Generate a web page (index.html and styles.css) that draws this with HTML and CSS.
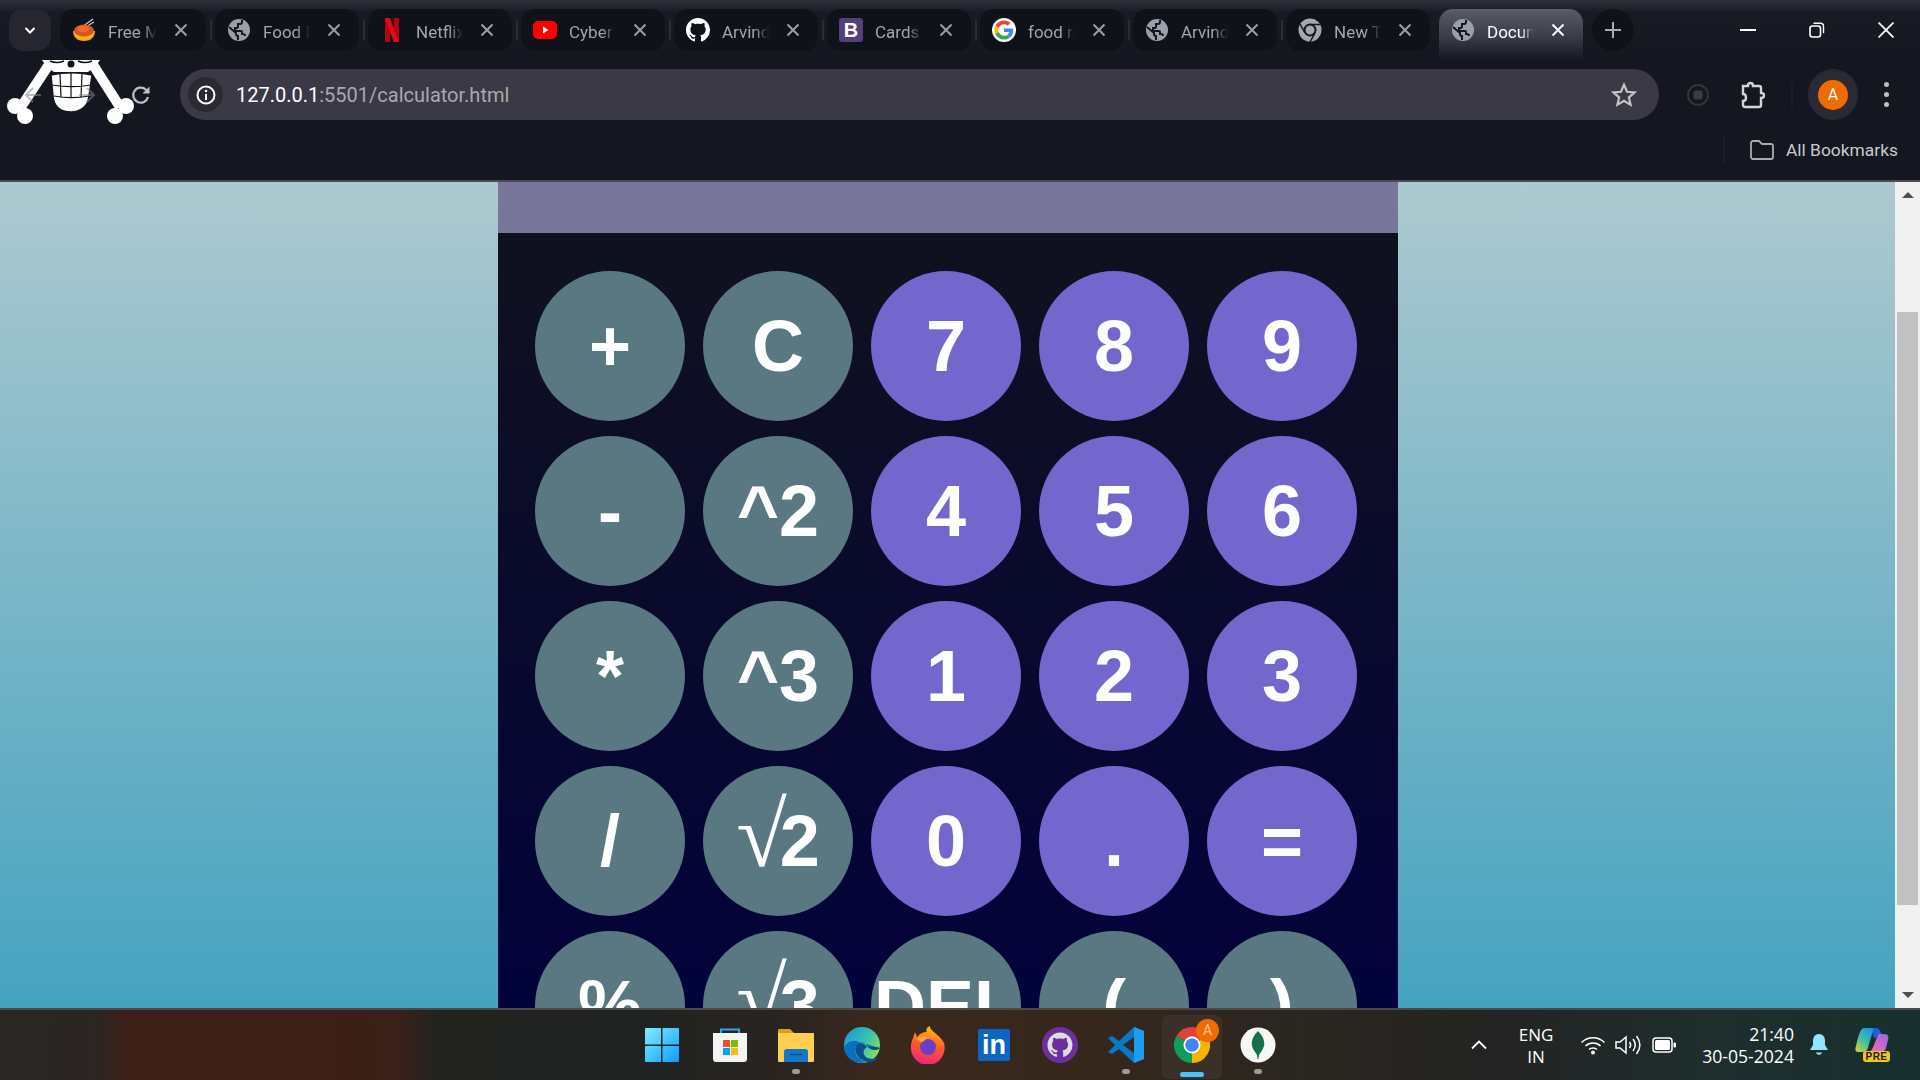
FILE: index.html
```html
<!DOCTYPE html>
<html lang="en">
<head>
    <meta charset="UTF-8">
    <meta name="viewport" content="width=device-width, initial-scale=1.0">
    <title>Document</title>
    <link rel="stylesheet" href="styles.css">
</head>
<body>
    <svg class="defs" width="0" height="0">
        <symbol id="globe" viewBox="0 0 24 24">
            <circle cx="12" cy="12" r="11" fill="#9aa0aa"/>
            <path d="M2 9l7 6v1a2 2 0 0 0 2 2v4M15 2v2a2 2 0 0 1-2 2h-2v3a1 1 0 0 1-1 1H8v3h6a1 1 0 0 1 1 1v2h1a2 2 0 0 1 2 2" fill="none" stroke="#15171f" stroke-width="2"/>
        </symbol>
        <symbol id="cross" viewBox="0 0 14 14">
            <path d="M1.500 1.500l11 11M12.500 1.500l-11 11" stroke="currentColor" stroke-width="2" fill="none"/>
        </symbol>
    </svg>

    <header class="browser">
        <div class="tabstrip">
            <button class="tab-menu">
                <svg width="14" height="14" viewBox="0 0 14 14"><path d="M2.500 5l4.500 4.500L11.500 5" stroke="#fff" stroke-width="2" fill="none"/></svg>
            </button>
            <div class="tabs">
                <div class="tab">
                    <svg class="favicon" viewBox="0 0 24 24"><path d="M10 9L21 1M12 10l10-6" stroke="#c9c9c9" stroke-width="1.200"/><path d="M1 13h22c0 6-4 10-11 10S1 19 1 13z" fill="#f5ab25"/><ellipse cx="12" cy="12.500" rx="10" ry="6" fill="#d9531e"/><ellipse cx="11" cy="11" rx="6" ry="3.500" fill="#e9702a"/></svg>
                    <span class="tab-title">Free Meal</span>
                    <svg class="tab-close"><use href="#cross"/></svg>
                </div>
                <div class="tab">
                    <svg class="favicon"><use href="#globe"/></svg>
                    <span class="tab-title">Food Recipe</span>
                    <svg class="tab-close"><use href="#cross"/></svg>
                </div>
                <div class="tab">
                    <svg class="favicon" viewBox="0 0 24 24"><path d="M5 0h5v24l-5 .5z" fill="#b1060f"/><path d="M14 0h5v24.500L14 24z" fill="#b1060f"/><path d="M5 0h5l9 24.500h-5z" fill="#e50914"/></svg>
                    <span class="tab-title">Netflix</span>
                    <svg class="tab-close"><use href="#cross"/></svg>
                </div>
                <div class="tab">
                    <svg class="favicon" viewBox="0 0 24 24"><rect y="3" width="24" height="18" rx="5" fill="#f00"/><path d="M10 8.500v7l5.500-3.500z" fill="#fff"/></svg>
                    <span class="tab-title">Cyber</span>
                    <svg class="tab-close"><use href="#cross"/></svg>
                </div>
                <div class="tab">
                    <svg class="favicon" viewBox="0 0 16 16"><path fill="#fff" d="M8 0C3.580 0 0 3.580 0 8c0 3.540 2.290 6.530 5.470 7.590.4.070.55-.17.55-.38 0-.19-.01-.82-.01-1.490-2.010.37-2.530-.49-2.690-.94-.09-.23-.48-.94-.82-1.130-.28-.15-.68-.52-.01-.53.63-.01 1.080.58 1.230.82.72 1.210 1.870.87 2.330.66.07-.52.28-.87.51-1.070-1.780-.2-3.640-.89-3.640-3.950 0-.87.31-1.590.82-2.150-.08-.2-.36-1.020.08-2.120 0 0 .67-.21 2.200.82.64-.18 1.320-.27 2-.27s1.360.09 2 .27c1.530-1.040 2.200-.82 2.200-.82.44 1.100.16 1.920.08 2.120.51.56.82 1.270.82 2.150 0 3.070-1.870 3.750-3.650 3.950.29.25.54.73.54 1.480 0 1.070-.01 1.930-.01 2.200 0 .21.15.46.55.38A8.013 8.013 0 0 0 16 8c0-4.420-3.580-8-8-8z"/></svg>
                    <span class="tab-title">Arvind</span>
                    <svg class="tab-close"><use href="#cross"/></svg>
                </div>
                <div class="tab">
                    <span class="favicon favicon-b">B</span>
                    <span class="tab-title">Cards</span>
                    <svg class="tab-close"><use href="#cross"/></svg>
                </div>
                <div class="tab">
                    <svg class="favicon" viewBox="-6 -6 60 60"><circle cx="24" cy="24" r="30" fill="#fff"/><path fill="#EA4335" d="M24 9.500c3.540 0 6.710 1.220 9.210 3.600l6.850-6.850C35.900 2.380 30.470 0 24 0 14.620 0 6.510 5.380 2.560 13.220l7.980 6.190C12.430 13.720 17.740 9.500 24 9.500z"/><path fill="#4285F4" d="M46.980 24.550c0-1.570-.15-3.090-.38-4.550H24v9.020h12.940c-.58 2.960-2.260 5.480-4.780 7.180l7.730 6c4.510-4.180 7.090-10.360 7.090-17.650z"/><path fill="#FBBC05" d="M10.530 28.590c-.48-1.450-.76-2.990-.76-4.590s.27-3.140.76-4.590l-7.980-6.190C.92 16.460 0 20.120 0 24c0 3.880.92 7.540 2.560 10.780l7.970-6.190z"/><path fill="#34A853" d="M24 48c6.480 0 11.930-2.130 15.890-5.810l-7.730-6c-2.150 1.450-4.920 2.300-8.160 2.300-6.260 0-11.570-4.220-13.470-9.910l-7.980 6.190C6.510 42.620 14.620 48 24 48z"/></svg>
                    <span class="tab-title">food recipes</span>
                    <svg class="tab-close"><use href="#cross"/></svg>
                </div>
                <div class="tab">
                    <svg class="favicon"><use href="#globe"/></svg>
                    <span class="tab-title">Arvind</span>
                    <svg class="tab-close"><use href="#cross"/></svg>
                </div>
                <div class="tab">
                    <svg class="favicon" viewBox="0 0 24 24"><circle cx="12" cy="12" r="11.500" fill="#a4a7ad"/><circle cx="12" cy="12" r="5.500" fill="#a4a7ad" stroke="#15171f" stroke-width="2"/><path d="M12 6.500h10M7 15l-5-9M17 15l-5 9" stroke="#15171f" stroke-width="1.500"/></svg>
                    <span class="tab-title">New Tab</span>
                    <svg class="tab-close"><use href="#cross"/></svg>
                </div>
                <div class="tab tab-active">
                    <svg class="favicon"><use href="#globe"/></svg>
                    <span class="tab-title">Document</span>
                    <svg class="tab-close"><use href="#cross"/></svg>
                </div>
            </div>
            <button class="tab-new">
                <svg width="16" height="16" viewBox="0 0 16 16"><path d="M8 0v16M0 8h16" stroke="#a9abb0" stroke-width="2"/></svg>
            </button>
            <div class="win-controls">
                <svg width="16" height="16" viewBox="0 0 16 16"><path d="M0 8h16" stroke="#fff" stroke-width="2"/></svg>
                <svg width="16" height="16" viewBox="0 0 16 16"><rect x="1" y="4" width="10.500" height="11" rx="2.500" fill="none" stroke="#fff" stroke-width="1.600"/><path d="M4.500 1.200h7a3 3 0 0 1 3 3v7" fill="none" stroke="#fff" stroke-width="1.400"/></svg>
                <svg width="16" height="16" viewBox="0 0 16 16"><path d="M.5.500l15 15M15.500.500l-15 15" stroke="#fff" stroke-width="1.800"/></svg>
            </div>
        </div>

        <div class="toolbar">
            <!-- logo sits under the back / forward arrows -->
            <svg class="logo" width="134" height="70" viewBox="0 0 134 70">
                <path d="M52 0L21 47" stroke="#fff" stroke-width="10" fill="none"/>
                <path d="M90 0l30 47" stroke="#fff" stroke-width="10" fill="none"/>
                <circle cx="15" cy="46" r="8" fill="#fff"/><circle cx="25" cy="56" r="8" fill="#fff"/>
                <circle cx="126" cy="46" r="8" fill="#fff"/><circle cx="115" cy="56" r="8" fill="#fff"/>
                <path d="M42 0h58c-3 5-7 9-12 12l-34 0c-5-3-9-7-12-12z" fill="#fff"/>
                <path d="M51 15c13-3 28-3 41 0l-3 21c-1 11-9 16-18 16-10 0-17-5-18-16z" fill="#fff" stroke="#14171f" stroke-width="1.500"/>
                <circle cx="71" cy="4" r="3.500" fill="#111"/>
                <path d="M50 1c4 2 9 2 14 0M78 1c4 2 9 2 14 0" stroke="#111" stroke-width="1.500" fill="none"/>
                <path d="M52 25c13 2 27 2 39 0M54 36c11 2 24 2 35 0M60 14l1 23M71 13v25M82 14l-1 23" stroke="#111" stroke-width="1.200" fill="none"/>
            </svg>
            <div class="nav">
                <svg class="nav-btn nav-off" width="24" height="24" viewBox="0 0 24 24"><path d="M20 12H5M12 5l-7 7 7 7" stroke="#85868c" stroke-width="2" fill="none"/></svg>
                <svg class="nav-btn nav-off" width="24" height="24" viewBox="0 0 24 24"><path d="M4 12h15M12 5l7 7-7 7" stroke="#85868c" stroke-width="2" fill="none"/></svg>
                <svg class="nav-btn" width="24" height="24" viewBox="0 0 24 24"><path d="M19 14a7.500 7.500 0 1 1-2-7.200L20 9.500" stroke="#bfc0c4" stroke-width="2.200" fill="none"/><path d="M20.500 3.500v7h-7z" fill="#bfc0c4"/></svg>
            </div>
            <div class="omnibox">
                <span class="site-info">
                    <svg width="20" height="20" viewBox="0 0 20 20"><circle cx="10" cy="10" r="8.500" fill="none" stroke="#fff" stroke-width="2"/><path d="M10 9v6" stroke="#fff" stroke-width="2"/><circle cx="10" cy="6" r="1.300" fill="#fff"/></svg>
                </span>
                <span class="url"><span class="url-host">127.0.0.1</span>:5501/calculator.html</span>
                <svg class="star" width="26" height="26" viewBox="0 0 24 24"><path d="M12 2.500l2.800 6.500 7 .6-5.300 4.600 1.600 6.900-6.100-3.700-6.100 3.700 1.600-6.900L2.200 9.600l7-.6z" fill="none" stroke="#c4c5c9" stroke-width="2"/></svg>
            </div>
            <svg class="rec" width="24" height="24" viewBox="0 0 24 24"><circle cx="12" cy="12" r="10" fill="none" stroke="#33343a" stroke-width="2"/><rect x="7.500" y="7.500" width="9" height="9" rx="2" fill="#3b3c42"/></svg>
            <svg class="puzzle" width="26" height="28" viewBox="0 0 26 28"><path d="M3 5h5c0-4 5-4 5 0h6a2 2 0 0 1 2 2v5c4 0 4 5 0 5v7a2 2 0 0 1-2 2H5a2 2 0 0 1-2-2v-4c4 0 4-7 0-7z" fill="none" stroke="#d4d5d8" stroke-width="2.400"/></svg>
            <span class="tool-sep"></span>
            <span class="avatar-chip"><span class="avatar">A</span></span>
            <span class="kebab"><i></i><i></i><i></i></span>
        </div>

        <div class="bookmarks">
            <span class="tool-sep"></span>
            <svg width="24" height="20" viewBox="0 0 24 20"><path d="M1 17V3a2 2 0 0 1 2-2h6l3 3h9a2 2 0 0 1 2 2v11a2 2 0 0 1-2 2H3a2 2 0 0 1-2-2z" fill="none" stroke="#a9abb0" stroke-width="1.800"/></svg>
            <span class="bookmarks-label">All Bookmarks</span>
        </div>
    </header>

    <main class="viewport">
        <div class="page">
            <div class="calc">
                <div class="calc-display"></div>
                <div class="keypad">
                    <button class="key key-op">+</button>
                    <button class="key key-op">C</button>
                    <button class="key">7</button>
                    <button class="key">8</button>
                    <button class="key">9</button>

                    <button class="key key-op">-</button>
                    <button class="key key-op">^2</button>
                    <button class="key">4</button>
                    <button class="key">5</button>
                    <button class="key">6</button>

                    <button class="key key-op">*</button>
                    <button class="key key-op">^3</button>
                    <button class="key">1</button>
                    <button class="key">2</button>
                    <button class="key">3</button>

                    <button class="key key-op">/</button>
                    <button class="key key-op"><span class="root">√</span>2</button>
                    <button class="key">0</button>
                    <button class="key">.</button>
                    <button class="key">=</button>

                    <button class="key key-op">%</button>
                    <button class="key key-op"><span class="root">√</span>3</button>
                    <button class="key key-op">DEL</button>
                    <button class="key key-op">(</button>
                    <button class="key key-op">)</button>
                </div>
            </div>
        </div>
        <div class="scrollbar">
            <span class="arrow arrow-up"></span>
            <div class="scroll-track"><div class="scroll-thumb"></div></div>
            <span class="arrow arrow-down"></span>
        </div>
    </main>

    <footer class="taskbar">
        <div class="task-apps">
            <div class="app app-start">
                <svg width="36" height="36" viewBox="0 0 36 36">
                    <defs><linearGradient id="win" x1="0" y1="0" x2="1" y2="1"><stop offset="0" stop-color="#7eeeff"/><stop offset="1" stop-color="#0f9bff"/></linearGradient></defs>
                    <path d="M1 2a1 1 0 0 1 1-1h15v16.500H1zM18.500 1H34a1 1 0 0 1 1 1v15.500H18.500zM1 19h16v16H2a1 1 0 0 1-1-1zM18.500 19H35v15a1 1 0 0 1-1 1H18.500z" fill="url(#win)"/>
                </svg>
            </div>
            <div class="app">
                <svg width="36" height="36" viewBox="0 0 36 36">
                    <path d="M9 8V2.500h18V8" fill="none" stroke="#2aa8e8" stroke-width="2"/>
                    <path d="M1 6h34v26a3 3 0 0 1-3 3H4a3 3 0 0 1-3-3z" fill="#f4f4f4"/>
                    <rect x="11" y="13" width="7" height="7" fill="#f25022"/><rect x="19" y="13" width="7" height="7" fill="#7fba00"/>
                    <rect x="11" y="21" width="7" height="7" fill="#00a4ef"/><rect x="19" y="21" width="7" height="7" fill="#ffb900"/>
                </svg>
            </div>
            <div class="app app-open">
                <svg width="36" height="36" viewBox="0 0 36 36">
                    <path d="M0 3a1 1 0 0 1 1-1h11l4 4h20v6H0z" fill="#dea20c"/>
                    <path d="M0 6h36v28a1 1 0 0 1-1 1H1a1 1 0 0 1-1-1z" fill="#ffd04f"/>
                    <path d="M6 35V25a3 3 0 0 1 3-3h18a3 3 0 0 1 3 3v10z" fill="#1478c9"/>
                    <path d="M12 27.500h12" stroke="#0b4f8a" stroke-width="1.500"/>
                </svg>
            </div>
            <div class="app">
                <svg width="36" height="36" viewBox="0 0 36 36">
                    <defs><linearGradient id="edge" x1="0" y1="0" x2="1" y2="0.600"><stop offset="0" stop-color="#1497d8"/><stop offset=".6" stop-color="#36c0b0"/><stop offset="1" stop-color="#7ee060"/></linearGradient></defs>
                    <circle cx="18" cy="18" r="18" fill="url(#edge)"/>
                    <path d="M36 21c-3 3-10 3-13-2-2-4-7-5-10-2-5 6 0 17 10 18-10 3-22-3-23-14 2-6 10-9 15-6z" fill="#0c6fbd"/>
                    <path d="M13 17c-4 5-1 15 10 18 4 1 9-1 11-5-5 3-11 2-13-1-3-4-1-7 2-9-3-4-7-5-10-3z" fill="#0b4f92"/>
                    <path d="M36 21c-2 2-9 3-13-2 2 2 7 0 13 2z" fill="#1c2220" opacity=".5"/>
                </svg>
            </div>
            <div class="app">
                <svg width="36" height="38" viewBox="0 0 36 38">
                    <defs><linearGradient id="fox" x1="0.600" y1="0" x2="0.400" y2="1"><stop offset="0" stop-color="#ffc400"/><stop offset=".5" stop-color="#ff5a2c"/><stop offset="1" stop-color="#f0207e"/></linearGradient></defs>
                    <path d="M3 12L5 6l2 5c3-4 7-5 10-5-2-2 0-5 3-6-1 5 9 7 14 17 3 11-5 22-16 22S0 29 1 20c0-3 1-6 2-8z" fill="url(#fox)"/>
                    <circle cx="18" cy="21" r="8" fill="#6a3fc8"/>
                    <path d="M7 13c3-3 7-3 11-1-3 1-4 3-5 4-3 0-5-1-6-3z" fill="#ffa436"/>
                </svg>
            </div>
            <div class="app">
                <span class="linkedin">in</span>
            </div>
            <div class="app">
                <svg width="36" height="36" viewBox="-3.500 -3.500 23 23">
                    <circle cx="8" cy="8" r="11.500" fill="#6e2f9e"/>
                    <path fill="#ddd" d="M8 0C3.580 0 0 3.580 0 8c0 3.540 2.290 6.530 5.470 7.590.4.070.55-.17.55-.38v-1.490c-2.010.37-2.530-.49-2.690-.94-.09-.23-.48-.94-.82-1.130-.28-.15-.68-.52-.01-.53.63-.01 1.080.58 1.230.82.72 1.210 1.870.87 2.330.66.07-.52.28-.87.51-1.070-1.780-.2-3.640-.89-3.640-3.950 0-.87.31-1.590.82-2.150-.08-.2-.36-1.020.08-2.120 0 0 .67-.21 2.200.82.64-.18 1.320-.27 2-.27s1.360.09 2 .27c1.530-1.040 2.200-.82 2.200-.82.44 1.100.16 1.920.08 2.120.51.56.82 1.270.82 2.150 0 3.070-1.870 3.750-3.650 3.950.29.25.54.73.54 1.480v2.200c0 .21.15.46.55.38A8.013 8.013 0 0 0 16 8c0-4.420-3.580-8-8-8z"/>
                </svg>
            </div>
            <div class="app app-open">
                <svg width="36" height="36" viewBox="0 0 36 36">
                    <path fill-rule="evenodd" d="M26 0L11 14 4 9 0 11l7 7-7 7 4 2 7-5 15 14 10-4V4zM26 10l-11 8 11 8z" fill="#0a78c8"/>
                    <path d="M26 0l10 4v28l-10 4z" fill="#1f9cf0"/>
                </svg>
            </div>
            <div class="app app-active">
                <svg width="36" height="36" viewBox="-18 -18 36 36">
                    <path d="M15.600-9A18 18 0 0 0-15.600-9L0 0z" fill="#db4437"/>
                    <path d="M-15.600-9A18 18 0 0 0 0 18L0 0z" fill="#0f9d58"/>
                    <path d="M0 18A18 18 0 0 0 15.600-9L0 0z" fill="#f4b400"/>
                    <circle r="8.500" fill="#fff"/><circle r="6.800" fill="#4285f4"/>
                </svg>
                <span class="app-badge">A</span>
            </div>
            <div class="app app-open">
                <svg width="36" height="36" viewBox="0 0 36 36">
                    <circle cx="18" cy="18" r="17.500" fill="#f7f7f5"/>
                    <path d="M18 4c5 5 7 10 6 15-1 4-4 7-5 9l-.5 4h-1l-.5-4c-1-2-4-5-5-9-1-5 1-10 6-15z" fill="#13704a"/>
                </svg>
            </div>
        </div>

        <div class="tray">
            <svg class="tray-caret" width="16" height="10" viewBox="0 0 16 10"><path d="M1 8.500l7-7 7 7" fill="none" stroke="#fff" stroke-width="1.800"/></svg>
            <div class="tray-lang"><span>ENG</span><span>IN</span></div>
            <svg class="tray-wifi" width="26" height="20" viewBox="0 0 26 20"><path d="M1.500 7.500c6-6.500 17-6.500 23 0M5.500 11c4-4 11-4 15 0M9 14.500c2-2 6-2 8 0" fill="none" stroke="#fff" stroke-width="1.500"/><circle cx="13" cy="17.500" r="2" fill="#fff"/></svg>
            <svg class="tray-vol" width="26" height="22" viewBox="0 0 26 22"><path d="M1 8h4l6-5v16l-6-5H1z" fill="none" stroke="#fff" stroke-width="1.500"/><path d="M14.500 8c1.500 2 1.500 4 0 6M18 5c3 4 3 8 0 12M21.500 2c4.500 6 4.500 12 0 18" fill="none" stroke="#fff" stroke-width="1.500"/></svg>
            <svg class="tray-bat" width="24" height="16" viewBox="0 0 24 16"><rect x="1" y="1" width="19" height="14" rx="3" fill="none" stroke="#fff" stroke-width="1.500"/><rect x="3" y="3" width="15" height="10" rx="1.500" fill="#fff"/><rect x="21.500" y="5.500" width="2.500" height="5" rx="1" fill="#fff"/></svg>
            <div class="tray-clock"><span>21:40</span><span>30-05-2024</span></div>
            <svg class="tray-bell" width="20" height="24" viewBox="0 0 20 24"><path d="M10 1c-4 0-6 3-6 7v4l-3 5h18l-3-5V8c0-4-2-7-6-7z" fill="#93e4ff"/><path d="M7 19.500h6c-.5 3-5.500 3-6 0z" fill="#93e4ff"/></svg>
            <div class="copilot">
                <svg width="34" height="26" viewBox="0 0 34 26">
                    <defs>
                        <linearGradient id="cop1" x1="0" y1="1" x2="0.800" y2="0"><stop offset="0" stop-color="#e8d030"/><stop offset=".5" stop-color="#3fc0a0"/><stop offset="1" stop-color="#1e90e8"/></linearGradient>
                        <linearGradient id="cop2" x1="0" y1="1" x2="1" y2="0"><stop offset="0" stop-color="#f070b0"/><stop offset="1" stop-color="#a060e8"/></linearGradient>
                    </defs>
                    <path d="M9 1h11c-3 5-5 12-7 20-1 3-3 4-6 4H3c-3 0-3-3-2-6C3 11 5 1 9 1z" fill="url(#cop1)"/>
                    <path d="M18 1h3c3 0 4 2 5 5l1 3-8 2c-1-3-1-7-1-10z" fill="#1b63d8"/>
                    <path d="M24 7h6c3 0 4 3 3 6l-2 8c-1 3-3 4-6 4H15c4-4 5-12 9-18z" fill="url(#cop2)"/>
                </svg>
                <span class="pre-badge">PRE</span>
            </div>
        </div>
    </footer>
</body>
</html>
```

FILE: styles.css
```css
* {
    box-sizing: border-box;
}

html, body {
    height: 100%;
}

body {
    margin: 0;
    display: flex;
    flex-direction: column;
    overflow: hidden;
    font-family: Roboto, "Liberation Sans", sans-serif;
    background-color: #14171f;
}

button {
    border: none;
    padding: 0;
    font: inherit;
}

.defs {
    position: absolute;
}

/* ---------- browser frame ---------- */

.browser {
    flex: none;
    height: 182px;
    border-bottom: 2px solid #4b4b57;
    background: linear-gradient(#2f313c 0, #191b24 12px, #14171f 60px);
}

.tabstrip {
    display: flex;
    height: 60px;
    padding: 9px 0 0 9px;
}

.tab-menu {
    display: flex;
    align-items: center;
    justify-content: center;
    width: 42px;
    height: 42px;
    margin-right: 9px;
    border-radius: 14px;
    background-color: #25262f;
}

.tabs {
    display: flex;
    gap: 9px;
}

.tab {
    position: relative;
    display: flex;
    align-items: center;
    width: 144px;
    height: 42px;
    padding-left: 12px;
    border-radius: 14px;
    background-color: #10121a;
    color: #a3a5aa;
}

.tab:first-child {
    width: 146px;
}

.tab:first-child .tab-title {
    width: 49px;
}

.tab::after {
    content: "";
    position: absolute;
    top: 11px;
    right: -6px;
    width: 2px;
    height: 20px;
    background-color: #2a2c36;
}

.tab:nth-last-child(2)::after,
.tab-active::after {
    display: none;
}

.tab-active {
    height: 51px;
    padding-bottom: 9px;
    border-radius: 14px 14px 0 0;
    background: linear-gradient(#5d606b 0, #535661 5px, #3a3d48 28px, #191c25 48px);
    color: #fff;
}

.favicon {
    flex: none;
    width: 24px;
    height: 24px;
}

.favicon-b {
    border-radius: 3px;
    background-color: #563d7c;
    color: #fff;
    font-family: "Liberation Sans", sans-serif;
    font-size: 20px;
    font-weight: bold;
    line-height: 24px;
    text-align: center;
}

.tab-title {
    flex: none;
    width: 47px;
    margin: 3px 0 0 12px;
    overflow: hidden;
    font-size: 17px;
    white-space: nowrap;
    -webkit-mask-image: linear-gradient(90deg, #000 70%, transparent);
    mask-image: linear-gradient(90deg, #000 70%, transparent);
}

.tab-close {
    flex: none;
    width: 14px;
    height: 14px;
    margin-left: 17px;
    color: #9c9ea4;
}

.tab-active .tab-close {
    color: #fff;
}

.tab-new {
    display: flex;
    align-items: center;
    justify-content: center;
    width: 42px;
    height: 42px;
    margin-left: 9px;
    border-radius: 50%;
    background-color: #10121a;
}

.win-controls {
    display: flex;
    gap: 53px;
    height: 42px;
    margin-left: 106px;
    align-items: center;
}

/* ---------- toolbar ---------- */

.toolbar {
    position: relative;
    display: flex;
    align-items: center;
    height: 70px;
    padding: 9px 0 10px 6px;
}

.logo {
    position: absolute;
    top: 0;
    left: 0;
}

.nav {
    position: relative;
    display: flex;
    width: 174px;
}

.nav-btn {
    margin: 0 15px;
}

.nav-off {
    opacity: .55;
}

.omnibox {
    display: flex;
    align-items: center;
    width: 1479px;
    height: 51px;
    padding: 0 22px 0 8px;
    border-radius: 26px;
    background-color: #3a3945;
}

.site-info {
    display: flex;
    align-items: center;
    justify-content: center;
    width: 35px;
    height: 35px;
    border-radius: 50%;
    background-color: #2a2a34;
}

.url {
    flex: 1;
    margin-left: 13px;
    color: #a8a9ae;
    font-size: 20px;
}

.url-host {
    color: #fff;
}

.rec {
    margin-left: 27px;
}

.puzzle {
    margin-left: 30px;
}

.tool-sep {
    width: 2px;
    height: 26px;
    background-color: #1c1e27;
}

.toolbar .tool-sep {
    margin-left: 25px;
}

.avatar-chip {
    display: flex;
    align-items: center;
    justify-content: center;
    width: 50px;
    height: 51px;
    margin-left: 15px;
    border-radius: 25px;
    background-color: #2a2a34;
}

.avatar {
    width: 30px;
    height: 30px;
    border-radius: 50%;
    background-color: #ef6c00;
    color: #fff;
    font-size: 16px;
    line-height: 30px;
    text-align: center;
}

.kebab {
    display: flex;
    flex-direction: column;
    gap: 5px;
    margin-left: 26px;
}

.kebab i {
    width: 5px;
    height: 5px;
    border-radius: 50%;
    background-color: #bdbec2;
}

.bookmarks {
    display: flex;
    align-items: center;
    justify-content: flex-end;
    height: 40px;
    padding: 0 22px 0 0;
}

.bookmarks svg {
    margin: 0 12px 0 25px;
}

.bookmarks-label {
    color: #c8cad0;
    font-size: 17.4px;
}

/* ---------- page ---------- */

.viewport {
    flex: 1;
    display: flex;
    min-height: 0;
}

.page {
    flex: 1;
    overflow: hidden;
    background: linear-gradient(#adc9cf, #45a3c0);
}

.calc {
    width: 900px;
    margin-left: 498px;
}

.calc-display {
    height: 51px;
    background-color: #78769b;
}

.keypad {
    display: grid;
    grid-template-columns: repeat(5, 150px);
    grid-auto-rows: 150px;
    column-gap: 18px;
    row-gap: 15px;
    padding: 38px 0 39px 37px;
    background: linear-gradient(#10111e, #000040);
}

.key {
    border-radius: 50%;
    background-color: #7367ce;
    color: #fff;
    font-family: "Liberation Sans", Arial, sans-serif;
    font-size: 72px;
    font-weight: bold;
    line-height: 1;
}

.key-op {
    background-color: #597881;
}

/* the root sign came from a thinner fallback font in the original */
.root {
    font-family: "Liberation Serif", serif;
    font-size: 92px;
    font-weight: normal;
    line-height: 0;
    letter-spacing: -7px;
}

/* scrollbar drawn by hand so it looks like the windows one */

.scrollbar {
    flex: none;
    display: flex;
    flex-direction: column;
    align-items: center;
    width: 25px;
    background-color: #f1f1f1;
}

.scroll-track {
    flex: 1;
    width: 100%;
    padding: 114px 2px 0;
}

.scroll-thumb {
    height: 593px;
    background-color: #c1c1c1;
}

.arrow {
    width: 0;
    height: 0;
    border-left: 6px solid transparent;
    border-right: 6px solid transparent;
}

.arrow-up {
    margin-top: 10px;
    border-bottom: 6px solid #505050;
}

.arrow-down {
    margin-bottom: 10px;
    border-top: 6px solid #505050;
}

/* ---------- taskbar ---------- */

.taskbar {
    flex: none;
    display: flex;
    height: 72px;
    border-top: 2px solid #4a4945;
    background: linear-gradient(90deg,
        #2a2725 0, #2b2523 95px, #3f1f17 130px, #3b2018 395px, #222321 440px,
        #1f2322 640px, #2b2420 790px, #3a281c 870px, #35271c 1100px,
        #2a2620 1300px, #232423 1500px, #1f2d2d 1700px, #17302f 1920px);
}

.task-apps {
    display: flex;
    margin-left: 631px;
}

.app {
    position: relative;
    display: flex;
    align-items: center;
    justify-content: center;
    width: 66px;
    height: 70px;
    padding-bottom: 1px;
}

.app-start svg {
    margin-right: 4px;
}

.app-open::after,
.app-active::after {
    content: "";
    position: absolute;
    bottom: 6px;
    left: 29px;
    width: 8px;
    height: 5px;
    border-radius: 3px;
    background-color: #9c9a96;
}

.app-active::before {
    content: "";
    position: absolute;
    top: 5px;
    left: 3px;
    width: 60px;
    height: 64px;
    border-radius: 6px;
    background-color: #3a3028;
}

.app-active svg {
    position: relative;
}

.app-active::after {
    bottom: 3px;
    left: 21px;
    width: 24px;
    height: 5px;
    background-color: #4cc2ff;
}

.app-badge {
    position: absolute;
    top: 9px;
    left: 37px;
    width: 23px;
    height: 23px;
    border-radius: 50%;
    background-color: #ef6c00;
    color: #f6c6a0;
    font-size: 14px;
    line-height: 23px;
    text-align: center;
}

.linkedin {
    width: 32px;
    height: 32px;
    border-radius: 2px;
    background-color: #0a66c2;
    color: #fff;
    font-family: "Liberation Sans", sans-serif;
    font-size: 27px;
    font-weight: bold;
    line-height: 32px;
    text-align: center;
}

.tray {
    flex: 1;
    display: flex;
    align-items: center;
    height: 70px;
    color: #fff;
    font-family: "Open Sans", sans-serif;
    font-size: 17px;
}

.tray-caret {
    margin-left: 180px;
}

.tray-lang {
    display: flex;
    flex-direction: column;
    align-items: center;
    gap: 1px;
    width: 40px;
    margin-left: 29px;
    line-height: 21px;
}

.tray-wifi {
    margin-left: 24px;
}

.tray-vol {
    margin-left: 9px;
}

.tray-bat {
    margin-left: 11px;
}

.tray-clock {
    display: flex;
    flex-direction: column;
    align-items: flex-end;
    gap: 1px;
    width: 100px;
    margin-left: 18px;
    font-size: 17.6px;
    line-height: 21px;
}

.tray-bell {
    margin-left: 15px;
}

.copilot {
    position: relative;
    width: 36px;
    height: 36px;
    margin-left: 26px;
}

.pre-badge {
    position: absolute;
    top: 24px;
    left: 8px;
    width: 27px;
    height: 11px;
    border-radius: 3px;
    background-color: #f5c518;
    color: #222;
    font-family: "Liberation Sans", sans-serif;
    font-size: 10px;
    font-weight: bold;
    line-height: 11px;
    text-align: center;
    letter-spacing: .5px;
}
```
